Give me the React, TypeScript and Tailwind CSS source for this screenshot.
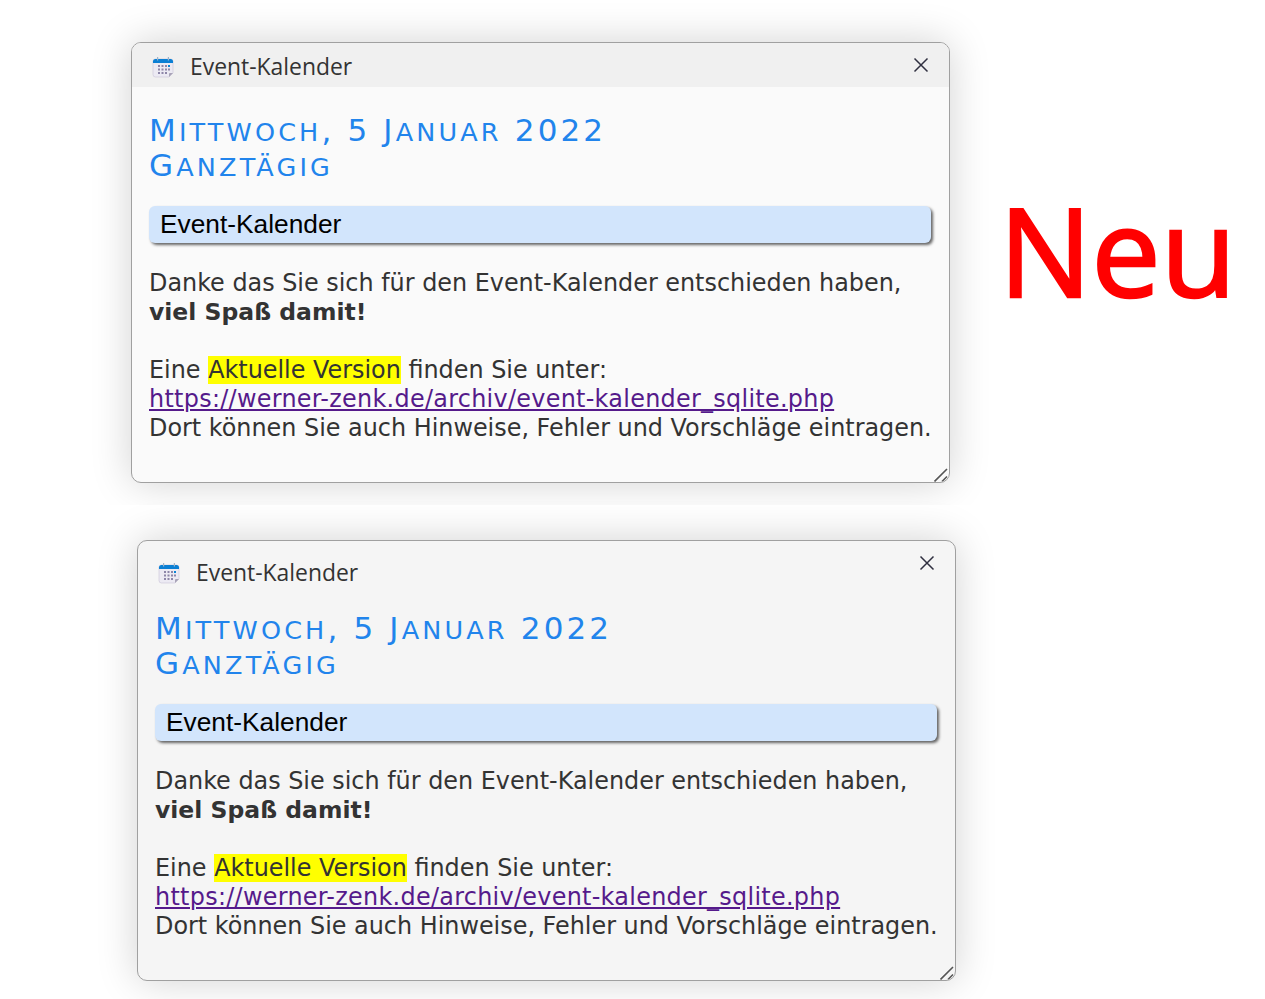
const body = '[font-family:"Open_Sans","Noto_Sans",sans-serif]';

function CalIcon() {
  const dots: [number, number, string][] = [];
  [9, 12.5, 16].forEach((y, r) =>
    [6, 9.5, 13, 16].forEach((x, c) => {
      if (r === 2 && c === 3) return;
      dots.push([x, y, r === 0 && c === 3 ? "#0a84d6" : "#8d86a8"]);
    })
  );
  return (
    <svg width="22" height="22" viewBox="0 0 22 22" className="shrink-0">
      <path d="M1 5.5 Q1 3 3.5 3 H18.5 Q21 3 21 5.5 V17 L17 21 H3.5 Q1 21 1 18.5 Z" fill="#eceaf3" stroke="#c9c5d6" strokeWidth="0.6" />
      <path d="M17 21 L21 17 H18 Q17 17 17 18 Z" fill="#a9a4b8" />
      <path d="M1 7 V5.5 Q1 3 3.5 3 H18.5 Q21 3 21 5.5 V7 Z" fill="#0a7fd4" />
      <rect x="5" y="1" width="1.2" height="3.5" fill="#9fb4c8" />
      <rect x="15.8" y="1" width="1.2" height="3.5" fill="#9fb4c8" />
      {dots.map(([x, y, c], i) => (
        <rect key={i} x={x} y={y} width="2" height="2" fill={c} />
      ))}
    </svg>
  );
}

function CloseIcon() {
  return (
    <svg width="16" height="16" viewBox="0 0 16 16" className="shrink-0">
      <path d="M1.5 1.5 L14.5 14.5 M14.5 1.5 L1.5 14.5" stroke="#303040" strokeWidth="1.5" fill="none" />
    </svg>
  );
}

function Grip() {
  return (
    <svg width="14" height="14" viewBox="0 0 14 14" className="absolute right-[1px] bottom-0">
      <path d="M0.5 13.5 L13 1 M8 13.5 L13 8.5" stroke="#555" strokeWidth="1.6" fill="none" />
    </svg>
  );
}

function Sc({ children }: { children: string }) {
  return <span className="text-[25.5px] leading-none uppercase">{children}</span>;
}

function Dialog({ alt }: { alt?: boolean }) {
  return (
    <div className={`relative w-[819px] h-[441px] rounded-[10px] border border-[#a0a0a0] overflow-hidden shadow-[0_0_40px_rgba(0,0,0,0.18)] ${alt ? "bg-[#f5f5f5]" : "bg-[#fafafa]"} ${body}`}>
      <div className={`h-[44px] flex items-center pl-[20px] pr-[20px] ${alt ? "" : "bg-[#f0f0f0]"}`}>
        <div className={alt ? "mt-[19px] flex items-center" : "mt-[3px] flex items-center"}>
          <CalIcon />
          <span className="ml-[16px] text-[22.9px] leading-[30px] text-[#333]">Event-Kalender</span>
        </div>
        <div className={alt ? "ml-auto mt-[-1px]" : "ml-auto"}>
          <CloseIcon />
        </div>
      </div>
      <div className="px-[17px]">
        <h2 className="mt-[26px] text-[31px] leading-[35px] text-[#2184ec] tracking-[3.15px] font-normal [font-family:'DejaVu_Sans',sans-serif]">
          M<Sc>ittwoch</Sc>, 5 J<Sc>anuar</Sc> 2022
          <br />
          G<Sc>anztägig</Sc>
        </h2>
        <div className="mt-[23px] h-[37px] w-[782px] flex items-center pl-[11px] rounded-[6px] bg-[#d2e5fc] shadow-[2px_2px_3px_rgba(0,0,0,0.6)] text-[26.3px] text-black [font-family:'Liberation_Sans',sans-serif]">
          Event-Kalender
        </div>
        <div className="mt-[26px] text-[23.88px] leading-[29px] text-[#333] whitespace-nowrap [font-family:'DejaVu_Sans',sans-serif]">
          <p>Danke das Sie sich für den Event-Kalender entschieden haben,</p>
          <p className="font-bold text-[23.5px]">viel Spaß damit!</p>
          <p className="mt-[29px]">
            Eine <span className="bg-[#ffff00]">Aktuelle Version</span> finden Sie unter:
          </p>
          <p className="text-[#551a8b] underline tracking-[0.29px]">https://werner-zenk.de/archiv/event-kalender_sqlite.php</p>
          <p>Dort können Sie auch Hinweise, Fehler und Vorschläge eintragen.</p>
        </div>
      </div>
      <Grip />
    </div>
  );
}

export default function App() {
  return (
    <div className="w-[1265px] h-[999px] overflow-hidden bg-white">
      <div className="h-[505px] overflow-hidden flex items-start pt-[42px] pl-[131px]">
        <Dialog />
        <div className="ml-[49px] mt-[142px] text-[123px] leading-[132px] text-[#ff0000] [-webkit-text-stroke:2.5px_#ff0000] [font-family:'Open_Sans',sans-serif]">Neu</div>
      </div>
      <div className="pt-[35px] pl-[137px]">
        <Dialog alt />
      </div>
    </div>
  );
}
